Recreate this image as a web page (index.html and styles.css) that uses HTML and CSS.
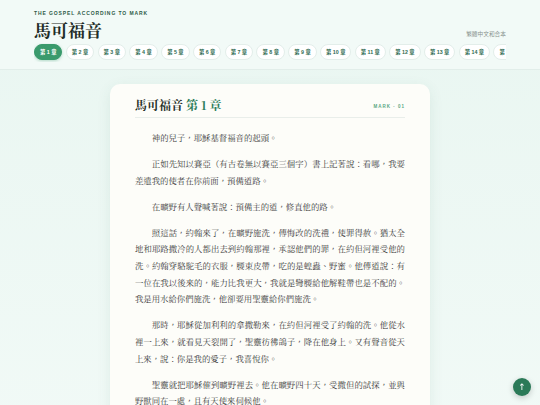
FILE: index.html
```html
<!DOCTYPE html>
<html lang="zh-Hant">
<head>
<meta charset="utf-8">
<title>馬可福音 第 1 章</title>
<link rel="stylesheet" href="styles.css">
</head>
<body>
<header class="site-header">
  <div class="header-top">
    <div class="brand">
      <div class="eyebrow">THE GOSPEL ACCORDING TO MARK</div>
      <h1 class="title">馬可福音</h1>
    </div>
    <div class="version">繁體中文和合本</div>
  </div>
  <nav class="chapters">
    <a class="pill active">第 1 章</a>
    <a class="pill">第 2 章</a>
    <a class="pill">第 3 章</a>
    <a class="pill">第 4 章</a>
    <a class="pill">第 5 章</a>
    <a class="pill">第 6 章</a>
    <a class="pill">第 7 章</a>
    <a class="pill">第 8 章</a>
    <a class="pill">第 9 章</a>
    <a class="pill">第 10 章</a>
    <a class="pill">第 11 章</a>
    <a class="pill">第 12 章</a>
    <a class="pill">第 13 章</a>
    <a class="pill">第 14 章</a>
    <a class="pill">第 15 章</a>
    <a class="pill">第 16 章</a>
  </nav>
</header>
<main class="main">
  <article class="card">
    <div class="card-head">
      <h2 class="card-title">馬可福音 <span class="accent">第 1 章</span></h2>
      <span class="tag">MARK · 01</span>
    </div>
    <p>神的兒子，耶穌基督福音的起頭。</p>
    <p>正如先知以賽亞（有古卷無以賽亞三個字）書上記著說：看哪，我要差遣我的使者在你前面，預備道路。</p>
    <p>在曠野有人聲喊著說：預備主的道，修直他的路。</p>
    <p>照這話，約翰來了，在曠野施洗，傳悔改的洗禮，使罪得赦。猶太全地和耶路撒冷的人都出去到約翰那裡，承認他們的罪，在約但河裡受他的洗。約翰穿駱駝毛的衣服，腰束皮帶，吃的是蝗蟲、野蜜。他傳道說：有一位在我以後來的，能力比我更大，我就是彎腰給他解鞋帶也是不配的。我是用水給你們施洗，他卻要用聖靈給你們施洗。</p>
    <p>那時，耶穌從加利利的拿撒勒來，在約但河裡受了約翰的洗。他從水裡一上來，就看見天裂開了，聖靈彷彿鴿子，降在他身上。又有聲音從天上來，說：你是我的愛子，我喜悅你。</p>
    <p>聖靈就把耶穌催到曠野裡去。他在曠野四十天，受撒但的試探，並與野獸同在一處，且有天使來伺候他。</p>
  </article>
</main>
<a class="to-top" aria-label="回到頂部">↑</a>
</body>
</html>
```
FILE: styles.css
```css
* { box-sizing: border-box; }
html, body { margin: 0; padding: 0; }
body {
  background: linear-gradient(180deg, #e9f6f1 0%, #f2faf7 100%);
  font-family: "Liberation Sans", "Noto Sans CJK TC", sans-serif;
  color: #333;
  min-height: 405px;
}
.site-header {
  background: #f2faf7;
  border-bottom: 1px solid #e2eeea;
  padding: 10px 34px 7px;
}
.header-top {
  display: flex;
  justify-content: space-between;
  align-items: flex-end;
}
.eyebrow {
  font-size: 5px;
  font-weight: 700;
  letter-spacing: 0.9px;
  color: #2f5a48;
  line-height: 6px;
}
.title {
  margin: 3px 0 0;
  font-family: "Noto Serif CJK TC", "Liberation Serif", serif;
  font-size: 17px;
  line-height: 21px;
  font-weight: 700;
  color: #1f2d27;
}
.version {
  font-family: "Noto Sans CJK TC", sans-serif;
  font-size: 5.7px;
  color: #8a9490;
  margin-bottom: 2px;
}
.chapters {
  display: flex;
  gap: 3.3px;
  margin-top: 3px;
  overflow: hidden;
  padding: 1px 0 2px;
}
.pill {
  flex: none;
  height: 16px;
  padding: 0 5px;
  border-radius: 8px;
  background: #ffffff;
  border: 1px solid #e3eeea;
  color: #2f6b52;
  font-family: "Liberation Sans", "Noto Sans CJK TC", sans-serif;
  font-size: 5.3px;
  font-weight: 700;
  display: flex;
  align-items: center;
  white-space: nowrap;
}
.pill.active {
  background: #3a9a6c;
  border-color: #3a9a6c;
  color: #fff;
  box-shadow: 0 1px 3px rgba(58, 154, 108, 0.35);
}
.main {
  padding: 14px 0 40px;
}
.card {
  width: 320px;
  margin: 0 auto;
  background: #fdfdf9;
  border-radius: 10px;
  padding: 12.5px 25px 20px;
  box-shadow: 0 4px 14px rgba(60, 120, 95, 0.10);
}
.card-head {
  display: flex;
  justify-content: space-between;
  align-items: center;
  border-bottom: 1px solid #e9eeea;
  padding-bottom: 4px;
  margin-bottom: 11.5px;
}
.card-title {
  margin: 0;
  font-family: "Noto Serif CJK TC", "Liberation Serif", serif;
  font-size: 12px;
  line-height: 16px;
  font-weight: 700;
  color: #1f2d27;
}
.accent { color: #2e7d5b; }
.tag {
  font-size: 4.5px;
  font-weight: 700;
  letter-spacing: 1px;
  color: #5aa784;
  margin-top: 4px;
}
.card p {
  margin: 0 0 9.5px;
  font-family: "Noto Serif CJK TC", "Liberation Serif", serif;
  font-size: 8.4px;
  line-height: 16.6px;
  text-indent: 2em;
  text-align: justify;
  color: #3b3b3b;
}
.to-top {
  position: fixed;
  right: 9px;
  bottom: 9px;
  width: 18px;
  height: 18px;
  border-radius: 50%;
  background: #2b7a58;
  color: #fff;
  font-size: 9px;
  display: flex;
  align-items: center;
  justify-content: center;
  box-shadow: 0 2px 6px rgba(0, 0, 0, 0.2);
  font-family: "DejaVu Sans", sans-serif;
}
```
